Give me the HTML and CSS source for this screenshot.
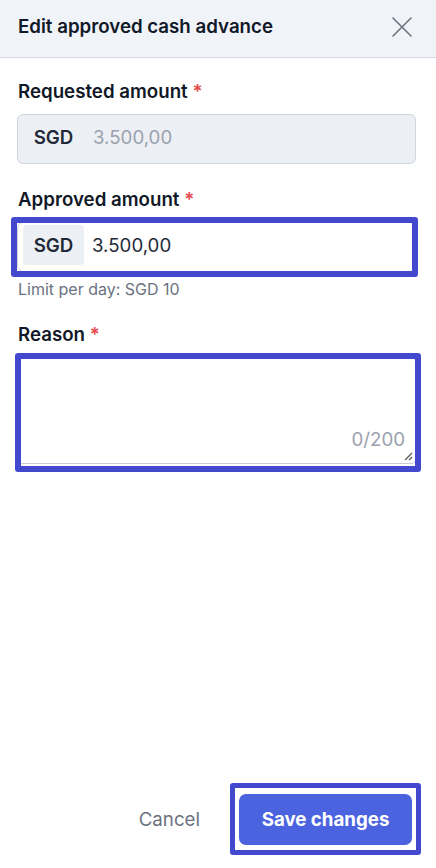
FILE: index.html
```html
<!DOCTYPE html>
<html lang="en">
<head>
  <meta charset="UTF-8">
  <title>Edit approved cash advance</title>
  <link rel="stylesheet" href="styles.css">
</head>
<body>
  <main class="sheet">
    <header class="sheet-head">
      <h1>Edit approved cash advance</h1>
      <button class="close" type="button" aria-label="Close">
        <svg width="20" height="20" viewBox="0 0 20 20"><path d="M1 1L19 19M19 1L1 19" stroke="#6b7280" stroke-width="1.6" stroke-linecap="round"/></svg>
      </button>
    </header>

    <section class="sheet-body">
      <div class="field">
        <label>Requested amount <span class="req">*</span></label>
        <div class="amount amount-disabled">
          <span class="addon">SGD</span>
          <span class="value">3.500,00</span>
        </div>
      </div>

      <div class="field">
        <label>Approved amount <span class="req">*</span></label>
        <div class="marked marked-amount">
          <div class="amount">
            <span class="addon addon-filled">SGD</span>
            <span class="value">3.500,00</span>
          </div>
        </div>
        <p class="hint">Limit per day: SGD 10</p>
      </div>

      <div class="field">
        <label>Reason <span class="req">*</span></label>
        <div class="marked marked-reason">
          <div class="reason">
            <span class="count">0/200</span>
            <svg class="grip" width="10" height="10" viewBox="0 0 10 10"><path d="M9 2L2 9M9 6L6 9" stroke="#555" stroke-width="1.2"/></svg>
          </div>
        </div>
      </div>
    </section>

    <footer class="sheet-foot">
      <button class="btn-cancel" type="button">Cancel</button>
      <div class="marked-save">
        <button class="btn-save" type="button">Save changes</button>
      </div>
    </footer>
  </main>
</body>
</html>
```

FILE: styles.css
```css
* {
  box-sizing: border-box;
}
body {
  margin: 0;
  font-family: Inter, "Noto Sans", sans-serif;
  font-size: 18.7px;
  color: #111827;
  background: #fff;
}
.sheet {
  display: flex;
  flex-direction: column;
  height: 100vh;
}
.sheet-head {
  display: flex;
  align-items: center;
  justify-content: space-between;
  height: 58px;
  padding: 0 24px 3px 18px;
  background: #f0f3f8;
  border-bottom: 1px solid #d5d9e0;
}
.sheet-head h1 {
  margin: 0;
  font-size: 18.7px;
  font-weight: 600;
  line-height: 24px;
}
.close {
  border: 0;
  background: none;
  padding: 0;
  width: 20px;
  height: 20px;
}
.sheet-body {
  padding: 22px 20px 0 17px;
}
.field {
  margin-bottom: 24px;
}
.field label {
  display: block;
  font-size: 18.7px;
  font-weight: 600;
  line-height: 24px;
  margin: 0 0 10px 1px;
}
.req {
  color: #e5484d;
}
.amount {
  display: flex;
  align-items: stretch;
  height: 50px;
  padding: 2px 5px 6px;
  border: 1px solid #d0d5dd;
  border-radius: 6px;
  background: #fff;
}
.amount-disabled {
  background: #eceff3;
}
.amount-disabled .value {
  color: #9aa1ae;
  padding-left: 9px;
}
.addon {
  display: flex;
  align-items: center;
  justify-content: center;
  width: 61px;
  font-weight: 600;
  color: #1f2937;
  border-radius: 4px;
}
.addon-filled {
  background: #eceff3;
}
.value {
  display: flex;
  align-items: center;
  padding-left: 8px;
  color: #1f2937;
}
.marked {
  position: relative;
}
.marked::after {
  content: "";
  position: absolute;
  border: 6px solid #4349cf;
  border-radius: 3px;
  pointer-events: none;
}
.marked-amount::after {
  left: -6px;
  right: -2px;
  top: -5px;
  bottom: -5px;
}
.marked-reason::after {
  left: -2px;
  right: -5px;
  top: -4px;
  bottom: -8px;
}
.hint {
  margin: 7px 0 0 1px;
  font-size: 16px;
  line-height: 20px;
  color: #6b7280;
}
.reason {
  position: relative;
  height: 107px;
  border: 1px solid #c9cfd9;
  border-radius: 4px;
  background: #fff;
}
.count {
  position: absolute;
  right: 10px;
  bottom: 12px;
  line-height: 22px;
  color: #9aa1ae;
}
.grip {
  position: absolute;
  right: 2px;
  bottom: 2px;
}
.sheet-foot {
  margin-top: auto;
  display: flex;
  align-items: center;
  justify-content: flex-end;
  gap: 30px;
  padding: 0 15px 13px 0;
}
.btn-cancel {
  border: 0;
  background: none;
  font-family: inherit;
  font-size: 18.7px;
  color: #6b7280;
  padding: 0;
}
.marked-save {
  border: 5px solid #4349cf;
  border-radius: 3px;
  padding: 6px 4px 5px;
}
.btn-save {
  display: block;
  width: 173px;
  height: 51px;
  border: 0;
  border-radius: 7px;
  background: #4c63df;
  color: #fff;
  font-family: inherit;
  font-size: 18.7px;
  font-weight: 700;
}
```
